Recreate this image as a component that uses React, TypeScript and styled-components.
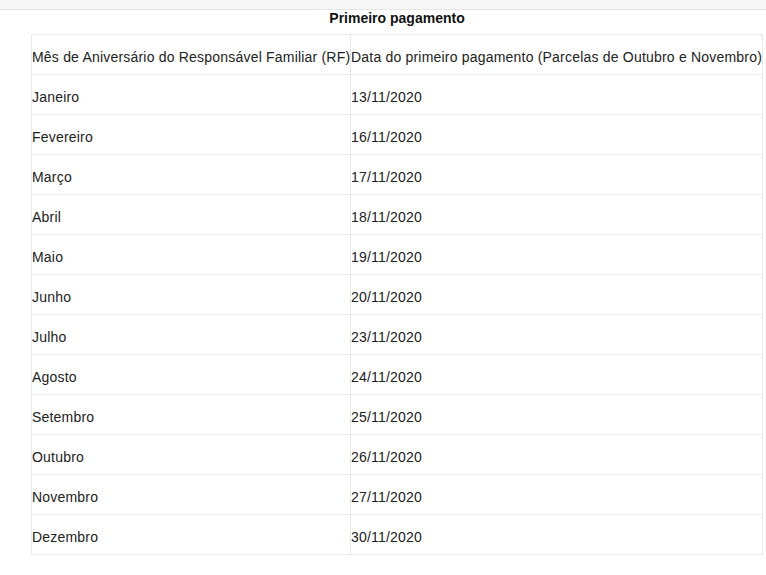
import React from "react";
import styled, { createGlobalStyle } from "styled-components";

const Global = createGlobalStyle`
  html, body { margin: 0; padding: 0; background: #fff; }
  body { font-family: "Liberation Sans", Arial, sans-serif; color: #222; }
`;

const TopStrip = styled.div`
  height: 9px;
  background: #f7f7f7;
  border-bottom: 1px solid #e4e4e4;
`;

const Wrap = styled.div`
  padding-left: 31px;
`;

const Table = styled.table`
  border-collapse: collapse;
  table-layout: fixed;
  width: 731px;
  font-size: 14px;
  letter-spacing: 0.2px;
`;

const Caption = styled.caption`
  font-weight: bold;
  font-size: 14px;
  letter-spacing: 0;
  color: #111;
  height: 24px;
  line-height: 16px;
  padding-top: 0;
  text-align: center;
`;

const Cell = styled.td`
  border: 1px solid #e9e9e9;
  height: 35px;
  padding: 4px 0 0 0;
  vertical-align: middle;
  white-space: nowrap;
  color: #222;
  overflow: visible;
`;

const rows: [string, string][] = [
  ["Janeiro", "13/11/2020"],
  ["Fevereiro", "16/11/2020"],
  ["Março", "17/11/2020"],
  ["Abril", "18/11/2020"],
  ["Maio", "19/11/2020"],
  ["Junho", "20/11/2020"],
  ["Julho", "23/11/2020"],
  ["Agosto", "24/11/2020"],
  ["Setembro", "25/11/2020"],
  ["Outubro", "26/11/2020"],
  ["Novembro", "27/11/2020"],
  ["Dezembro", "30/11/2020"],
];

export default function App() {
  return (
    <>
      <Global />
      <TopStrip />
      <Wrap>
        <Table>
          <Caption>Primeiro pagamento</Caption>
          <colgroup>
            <col style={{ width: 319 }} />
            <col style={{ width: 412 }} />
          </colgroup>
          <tbody>
            <tr>
              <Cell>Mês de Aniversário do Responsável Familiar (RF)</Cell>
              <Cell>Data do primeiro pagamento (Parcelas de Outubro e Novembro)</Cell>
            </tr>
            {rows.map(([m, d]) => (
              <tr key={m}>
                <Cell>{m}</Cell>
                <Cell>{d}</Cell>
              </tr>
            ))}
          </tbody>
        </Table>
      </Wrap>
    </>
  );
}
